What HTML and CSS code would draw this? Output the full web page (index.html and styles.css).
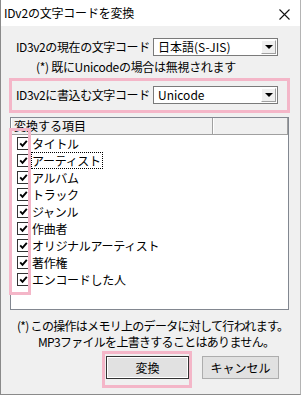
FILE: index.html
```html
<!DOCTYPE html>
<html lang="ja">
<head>
    <meta charset="UTF-8">
    <title>IDv2の文字コードを変換</title>
    <link rel="stylesheet" href="styles.css">
</head>
<body>
    <div class="window">
        <div class="titlebar">
            <span class="title">IDv2の文字コードを変換</span>
            <svg class="close" width="11" height="11" viewBox="0 0 11 11">
                <path d="M0.5 0.5 L10.5 10.5 M10.5 0.5 L0.5 10.5" stroke="#111" stroke-width="1.1" fill="none"/>
            </svg>
        </div>
        <div class="content">
            <div class="row first">
                <span class="label">ID3v2の現在の文字コード</span>
                <div class="select">
                    <span>日本語(S-JIS)</span>
                    <span class="drop"><i></i></span>
                </div>
            </div>
            <div class="hint">(*) 既にUnicodeの場合は無視されます</div>
            <div class="mark-box">
                <div class="row">
                    <span class="label">ID3v2に書込む文字コード</span>
                    <div class="select">
                        <span>Unicode</span>
                        <span class="drop"><i></i></span>
                    </div>
                </div>
            </div>
            <div class="list">
                <div class="list-head">
                    <span class="col">変換する項目</span>
                    <span class="col rest"></span>
                </div>
                <ul class="items">
                    <li><span class="check"></span><span>タイトル</span></li>
                    <li><span class="check"></span><span class="focus">アーティスト</span></li>
                    <li><span class="check"></span><span>アルバム</span></li>
                    <li><span class="check"></span><span>トラック</span></li>
                    <li><span class="check"></span><span>ジャンル</span></li>
                    <li><span class="check"></span><span>作曲者</span></li>
                    <li><span class="check"></span><span>オリジナルアーティスト</span></li>
                    <li><span class="check"></span><span>著作権</span></li>
                    <li><span class="check"></span><span>エンコードした人</span></li>
                </ul>
                <div class="check-mark"></div>
            </div>
            <div class="note">
                <div>(*) この操作はメモリ上のデータに対して行われます。</div>
                <div class="indent">MP3ファイルを上書きすることはありません。</div>
            </div>
            <div class="buttons">
                <div class="btn-wrap">
                    <button class="btn default">変換</button>
                </div>
                <button class="btn">キャンセル</button>
            </div>
        </div>
    </div>
</body>
</html>
```

FILE: styles.css
```css
body {
    margin: 0;
    font-family: "Noto Sans CJK JP", "Noto Sans", sans-serif;
    font-size: 12px;
    color: #000;
    background: #f0f0f0;
}

.window {
    width: 301px;
    height: 395px;
    box-sizing: border-box;
    border-left: 1px solid #8a8a8a;
    border-right: 1px solid #b4b4b4;
    border-bottom: 1px solid #8a8a8a;
    background: #f0f0f0;
    overflow: hidden;
}

.titlebar {
    height: 26px;
    background: #fff;
    display: flex;
    align-items: center;
    justify-content: space-between;
    padding: 0 10px 0 3px;
}

.title {
    font-size: 12px;
    line-height: 14px;
    letter-spacing: -0.2px;
}

.close {
    margin-top: 3px;
}

.content {
    padding: 12px 10px 0 8px;
}

.row {
    display: grid;
    grid-template-columns: 137px 125px;
    align-items: center;
    height: 18px;
}

.row.first {
    padding-left: 7px;
}

.label {
    white-space: nowrap;
    line-height: 18px;
    letter-spacing: -0.4px;
}

.select {
    height: 18px;
    box-sizing: border-box;
    border: 1px solid #7a7a7a;
    background: #fff;
    display: flex;
    align-items: center;
    justify-content: space-between;
    padding-left: 4px;
}

.select span {
    line-height: 16px;
}

.drop {
    width: 15px;
    height: 14px;
    box-sizing: border-box;
    margin-right: 1px;
    background: #f0f0f0;
    border: 1px solid;
    border-color: #fff #a0a0a0 #a0a0a0 #fff;
    display: flex;
    align-items: center;
    justify-content: center;
}

.drop i {
    width: 0;
    height: 0;
    border-left: 4px solid transparent;
    border-right: 4px solid transparent;
    border-top: 4px solid #000;
}

.hint {
    margin-top: 3px;
    height: 16px;
    line-height: 16px;
    padding-left: 27px;
    letter-spacing: -0.3px;
}

.mark-box {
    margin-top: 3px;
    border: 3px solid #f4b6c8;
    padding: 5px 0 6px 4px;
}

.list {
    position: relative;
    margin: 4px 1px 0 1px;
    height: 193px;
    box-sizing: border-box;
    border: 1px solid #828790;
    background: #fff;
}

.list-head {
    display: flex;
    height: 16px;
    background: #f0f0f0;
    border-bottom: 1px solid #a0a0a0;
}

.list-head .col {
    width: 198px;
    padding-left: 2px;
    line-height: 16px;
    border-right: 1px solid #a0a0a0;
    border-left: 1px solid #fff;
}

.list-head .rest {
    flex: 1;
    width: auto;
}

.items {
    list-style: none;
    margin: 0;
    padding: 0;
}

.items li {
    display: flex;
    align-items: center;
    height: 17px;
    padding-left: 6px;
}

.check {
    width: 13px;
    height: 13px;
    box-sizing: border-box;
    border: 1px solid #333;
    margin-right: 1px;
    background: #fff url("data:image/svg+xml;utf8,<svg xmlns='http://www.w3.org/2000/svg' width='11' height='11'><path d='M2.2 5.4 L4.5 7.8 L8.8 2.8' stroke='black' stroke-width='1.9' fill='none'/></svg>") no-repeat center;
}

.items li span:last-child {
    line-height: 15px;
    border: 1px solid transparent;
    padding-right: 1px;
    letter-spacing: -0.3px;
}

.items .focus {
    border: 1px dotted #000 !important;
}

.check-mark {
    position: absolute;
    left: -2px;
    top: 10px;
    width: 16px;
    height: 161px;
    border: 3px solid #f4b6c8;
}

.note {
    margin-top: 8px;
    padding-left: 8px;
    line-height: 16px;
    white-space: nowrap;
    letter-spacing: -0.7px;
}

.note .indent {
    padding-left: 21px;
}

.buttons {
    margin-top: 6px;
    display: flex;
    justify-content: flex-end;
    align-items: center;
    gap: 12px;
    padding-right: 11px;
}

.btn-wrap {
    border: 3px solid #f4b6c8;
    padding: 2px 0 6px 1px;
    margin: -5px -2px -9px 0;
}

.btn {
    font-family: inherit;
    font-size: 12px;
    height: 23px;
    background: #e1e1e1;
    border: 1px solid #adadad;
    padding: 0;
    color: #000;
}

.btn.default {
    width: 83px;
    border: 1px solid #333;
    box-shadow: inset 0 0 0 1px #fff;
}

.buttons > .btn {
    width: 77px;
}
```
